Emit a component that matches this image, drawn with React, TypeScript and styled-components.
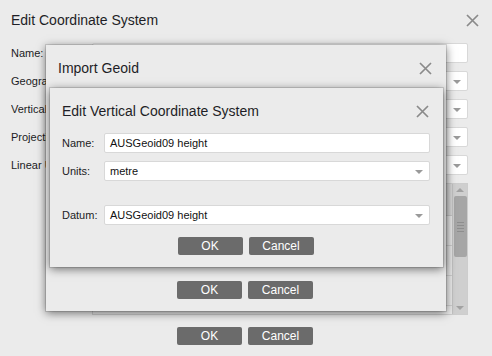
import React from "react";
import styled, { createGlobalStyle } from "styled-components";

const GlobalStyle = createGlobalStyle`
  html, body {
    margin: 0;
    padding: 0;
    background: #ebebeb;
  }
  body {
    font-family: "Liberation Sans", Arial, sans-serif;
    font-size: 11px;
    color: #1c1c24;
  }
  * {
    box-sizing: border-box;
  }
`;

const Page = styled.div`
  position: relative;
  width: 492px;
  height: 356px;
  overflow: hidden;
  background: #ebebeb;
  display: flex;
  flex-direction: column;
  padding: 0 13px 0 11px;
`;

const Window = styled.div<{ $left: number; $top: number; $w: number; $h: number }>`
  position: absolute;
  left: ${(p) => p.$left}px;
  top: ${(p) => p.$top}px;
  width: ${(p) => p.$w}px;
  height: ${(p) => p.$h}px;
  background: #ebebeb;
  display: flex;
  flex-direction: column;
  padding: 0 14px 12px 12px;
  box-shadow: 0 0 0 1px rgba(0, 0, 0, 0.12), 0 2px 9px rgba(0, 0, 0, 0.55);
`;

const TitleBar = styled.div<{ $h: number }>`
  height: ${(p) => p.$h}px;
  flex-shrink: 0;
  display: flex;
  align-items: center;
  justify-content: space-between;
`;

const Title = styled.div`
  font-size: 14px;
  color: #1e1e26;
`;

const Form = styled.div<{ $top: number; $right: number }>`
  display: flex;
  flex-direction: column;
  gap: 8px;
  margin-top: ${(p) => p.$top}px;
  margin-right: ${(p) => p.$right}px;
`;

const Row = styled.div<{ $label: number; $gap?: number }>`
  display: grid;
  grid-template-columns: ${(p) => p.$label}px 1fr;
  align-items: center;
  height: 20px;
  margin-top: ${(p) => p.$gap ?? 0}px;
`;

const Label = styled.span`
  white-space: nowrap;
  overflow: hidden;
`;

const Field = styled.div`
  position: relative;
  height: 20px;
  background: #fff;
  border: 1px solid #d8d8d8;
  border-radius: 2px;
  padding: 0 5px;
  display: flex;
  align-items: center;
  color: #111;
`;

const Arrow = styled.span`
  position: absolute;
  right: 6px;
  top: 8px;
  width: 0;
  height: 0;
  border-left: 4px solid transparent;
  border-right: 4px solid transparent;
  border-top: 4px solid #9a9a9a;
`;

const ButtonRow = styled.div<{ $top: number }>`
  display: flex;
  justify-content: center;
  gap: 6px;
  margin-top: ${(p) => p.$top}px;
`;

const Button = styled.div`
  width: 65px;
  height: 18px;
  background: #6b6b6b;
  border-radius: 2px;
  color: #fff;
  font-size: 12px;
  display: flex;
  align-items: center;
  justify-content: center;
`;

const Spacer = styled.div`
  flex: 1;
`;

const TablePanel = styled.div`
  margin: 8px 0 0 81px;
  height: 132px;
  display: flex;
  border: 1px solid #cdcdcd;
  background: #e9e9e9;
`;

const TableBody = styled.div`
  flex: 1;
  display: flex;
  flex-direction: column;
`;

const TableHead = styled.div`
  height: 32px;
  background: #d9d9d9;
  border-bottom: 1px solid #c6c6c6;
`;

const TableRow = styled.div`
  height: 30px;
  display: grid;
  grid-template-columns: 168px 1fr;
  border-bottom: 1px solid #cfcfcf;
  & > div:first-child {
    border-right: 1px solid #cfcfcf;
  }
`;

const Scrollbar = styled.div`
  width: 15px;
  background: #cfcfcf;
  border-left: 1px solid #c2c2c2;
  display: flex;
  flex-direction: column;
  align-items: center;
  padding: 4px 0;
`;

const ScrollArrow = styled.span<{ $up?: boolean }>`
  width: 0;
  height: 0;
  border-left: 4px solid transparent;
  border-right: 4px solid transparent;
  ${(p) => (p.$up ? "border-bottom: 4px solid #a2a2a2;" : "border-top: 4px solid #a2a2a2;")}
`;

const Thumb = styled.div`
  width: 13px;
  height: 61px;
  margin-top: 4px;
  background: #a6a6a6;
  border-radius: 2px;
  display: flex;
  flex-direction: column;
  align-items: center;
  justify-content: center;
  gap: 2px;
  & > i {
    display: block;
    width: 7px;
    height: 1px;
    background: #8e8e8e;
  }
`;

function CloseIcon() {
  return (
    <svg width="13" height="13" viewBox="0 0 13 13">
      <path d="M1 1 L12 12 M12 1 L1 12" stroke="#8a8a8a" strokeWidth="1.7" fill="none" />
    </svg>
  );
}

function Select({ value }: { value?: string }) {
  return (
    <Field>
      {value}
      <Arrow />
    </Field>
  );
}

function Buttons({ top }: { top: number }) {
  return (
    <ButtonRow $top={top}>
      <Button>OK</Button>
      <Button>Cancel</Button>
    </ButtonRow>
  );
}

export default function App() {
  return (
    <>
      <GlobalStyle />
      <Page>
        <TitleBar $h={40}>
          <Title>Edit Coordinate System</Title>
          <CloseIcon />
        </TitleBar>
        <Form $top={3} $right={11}>
          <Row $label={81}>
            <Label>Name:</Label>
            <Field />
          </Row>
          <Row $label={81}>
            <Label>Geographic System:</Label>
            <Select />
          </Row>
          <Row $label={81}>
            <Label>Vertical System:</Label>
            <Select />
          </Row>
          <Row $label={81}>
            <Label>Projection:</Label>
            <Select />
          </Row>
          <Row $label={81}>
            <Label>Linear Units:</Label>
            <Select />
          </Row>
        </Form>
        <TablePanel style={{ marginRight: 11 }}>
          <TableBody>
            <TableHead />
            <TableRow>
              <div />
              <div />
            </TableRow>
            <TableRow>
              <div />
              <div />
            </TableRow>
            <TableRow>
              <div />
              <div />
            </TableRow>
          </TableBody>
          <Scrollbar>
            <ScrollArrow $up />
            <Thumb>
              <i />
              <i />
              <i />
              <i />
            </Thumb>
            <Spacer />
            <ScrollArrow />
          </Scrollbar>
        </TablePanel>
        <Buttons top={12} />

        <Window $left={46} $top={45} $w={400} $h={266}>
          <TitleBar $h={46}>
            <Title>Import Geoid</Title>
            <CloseIcon />
          </TitleBar>
          <Spacer />
          <Buttons top={0} />

          <Window $left={4} $top={43} $w={393} $h={179}>
            <TitleBar $h={46}>
              <Title>Edit Vertical Coordinate System</Title>
              <CloseIcon />
            </TitleBar>
            <Form $top={-1} $right={-1}>
              <Row $label={42}>
                <Label>Name:</Label>
                <Field>AUSGeoid09 height</Field>
              </Row>
              <Row $label={42}>
                <Label>Units:</Label>
                <Select value="metre" />
              </Row>
              <Row $label={42} $gap={16}>
                <Label>Datum:</Label>
                <Select value="AUSGeoid09 height" />
              </Row>
            </Form>
            <Buttons top={12} />
          </Window>
        </Window>
      </Page>
    </>
  );
}
